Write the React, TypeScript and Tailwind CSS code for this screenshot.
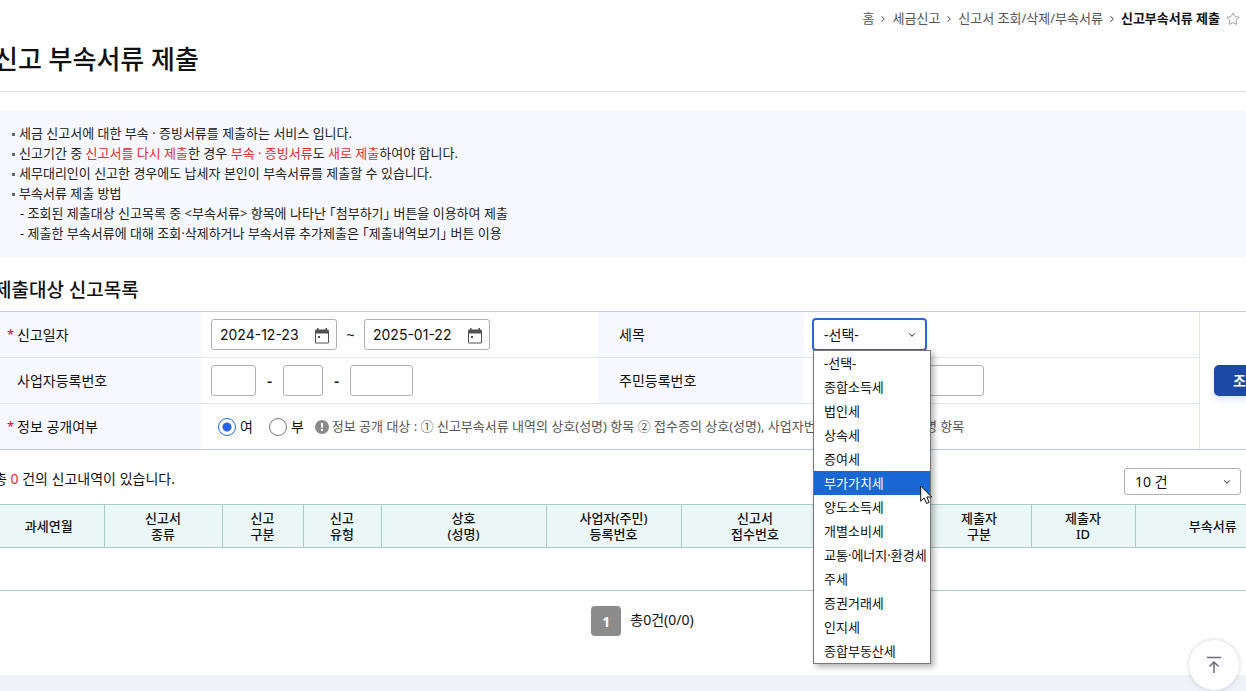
import { useState } from 'react'
import { ChevronDown, ChevronRight, Star } from 'lucide-react'

const TAX_TYPES = [
  '-선택-',
  '종합소득세',
  '법인세',
  '상속세',
  '증여세',
  '부가가치세',
  '양도소득세',
  '개별소비세',
  '교통·에너지·환경세',
  '주세',
  '증권거래세',
  '인지세',
  '종합부동산세',
]

const COLUMNS = [
  { width: 'w-[110px]', lines: ['과세연월'] },
  { width: 'w-[118px]', lines: ['신고서', '종류'] },
  { width: 'w-[81px]', lines: ['신고', '구분'] },
  { width: 'w-[78px]', lines: ['신고', '유형'] },
  { width: 'w-[165px]', lines: ['상호', '(성명)'] },
  { width: 'w-[135px]', lines: ['사업자(주민)', '등록번호'] },
  { width: 'w-[148px]', lines: ['신고서', '접수번호'] },
  { width: 'w-[98px]', lines: [] },
  { width: 'w-[104px]', lines: ['제출자', '구분'] },
  { width: 'w-[104px]', lines: ['제출자', 'ID'] },
  { width: '', lines: ['부속서류'] },
]

const box = 'h-[31px] rounded-[3px] border border-[#b0b0b0] bg-white'

function Breadcrumb() {
  return (
    <nav aria-label="현재 위치" className="flex h-[38px] items-center justify-end gap-1 pr-[6px] text-[13px] text-[#555]">
      <a href="#home">홈</a>
      <ChevronRight size={10} strokeWidth={2.5} />
      <a href="#report">세금신고</a>
      <ChevronRight size={10} strokeWidth={2.5} />
      <a href="#search">신고서 조회/삭제/부속서류</a>
      <ChevronRight size={10} strokeWidth={2.5} />
      <strong className="font-bold text-[#111]">신고부속서류 제출</strong>
      <button aria-label="즐겨찾기" className="pl-0.5">
        <Star size={14} strokeWidth={1.2} className="text-[#777]" />
      </button>
    </nav>
  )
}

function Notice() {
  const bullet = "before:mr-1 before:inline-block before:size-[3px] before:bg-[#666] before:align-middle before:content-['']"
  return (
    <section className="mt-[18px] h-[148px] bg-[#f7f8fd] pt-[13px] pl-[18px] text-[13px] leading-5 text-[#222]">
      <ul>
        <li className={bullet}>세금 신고서에 대한 부속 · 증빙서류를 제출하는 서비스 입니다.</li>
        <li className={bullet}>
          신고기간 중 <span className="text-[#e02b35]">신고서를 다시 제출</span>한 경우{' '}
          <span className="text-[#e02b35]">부속 · 증빙서류</span>도 <span className="text-[#e02b35]">새로 제출</span>하여야 합니다.
        </li>
        <li className={bullet}>세무대리인이 신고한 경우에도 납세자 본인이 부속서류를 제출할 수 있습니다.</li>
        <li className={bullet}>
          부속서류 제출 방법
          <ul className="pl-2">
            <li>- 조회된 제출대상 신고목록 중 &lt;부속서류&gt; 항목에 나타난 ｢첨부하기｣ 버튼을 이용하여 제출</li>
            <li>- 제출한 부속서류에 대해 조회·삭제하거나 부속서류 추가제출은 ｢제출내역보기｣ 버튼 이용</li>
          </ul>
        </li>
      </ul>
    </section>
  )
}

function DateField({ label, value }: { label: string; value: string }) {
  return (
    <div className={`${box} flex w-[126px] items-center justify-between pr-1.5 pl-2`}>
      <input aria-label={label} defaultValue={value} className="w-[90px] font-['Inter',sans-serif] text-[14px] outline-none" />
      <button aria-label={`${label} 달력`} className="pt-0.5">
        <svg width="16" height="16" viewBox="0 0 16 16">
          <path d="M3 0h1.500v1.500h7V0H13v1.500h.5A1.500 1.500 0 0 1 15 3v11a1.500 1.500 0 0 1-1.500 1.500h-11A1.500 1.500 0 0 1 1 14V3a1.500 1.500 0 0 1 1.500-1.500H3z" fill="#505050" />
          <path d="M2 5.500h12v8.500a.5.5 0 0 1-.5.5h-11A.5.5 0 0 1 2 14z" fill="#fff" />
          <path d="M4 8h2v2H4z" fill="#505050" />
        </svg>
      </button>
    </div>
  )
}

function Label({ children, required, className = '' }: { children: string; required?: boolean; className?: string }) {
  return (
    <div className={`flex shrink-0 items-center self-stretch bg-[#f6f8fe] text-[14px] ${className}`}>
      {required && <span className="w-[10px] text-[13px] text-[#d6003a]">*</span>}
      {children}
    </div>
  )
}

function TaxTypeSelect() {
  const [value, setValue] = useState('-선택-')
  return (
    <div className="relative flex items-center">
      <select
        aria-label="세목"
        value={value}
        onChange={(e) => setValue(e.target.value)}
        className="h-[33px] w-[115px] appearance-none rounded-[4px] border-2 border-[#2a66d4] bg-white pl-[10px] text-[14px] outline-none"
      >
        {TAX_TYPES.map((t) => (
          <option key={t}>{t}</option>
        ))}
      </select>
      <ChevronDown size={10} strokeWidth={2.5} className="pointer-events-none absolute right-[10px] text-[#444]" />
      <ul role="listbox" className="absolute top-8 left-px z-10 w-[118px] border border-[#767676] bg-white text-[13px] leading-6 whitespace-nowrap shadow-[3px_3px_6px_rgba(0,0,0,0.3)]">
        {TAX_TYPES.map((t) => (
          <li
            key={t}
            role="option"
            aria-selected={t === '부가가치세'}
            onClick={() => setValue(t)}
            className={`pl-[10px] ${t === '부가가치세' ? 'bg-[#1967d2] text-white' : 'text-[#111]'}`}
          >
            {t}
          </li>
        ))}
      </ul>
      <svg className="absolute top-[167px] left-[108px] z-20" width="13" height="20" viewBox="0 0 13 20">
        <path d="M.7 1v15.200l3.500-3.300 2.400 5.600 2.600-1.100-2.400-5.400h4.900z" fill="#fff" stroke="#111" strokeWidth="1" />
      </svg>
    </div>
  )
}

function SearchForm() {
  const radio =
    'size-[18px] appearance-none rounded-full border border-[#777] bg-white checked:border-[#2563eb] checked:bg-[radial-gradient(circle,#2563eb_4px,#fff_5px)]'
  return (
    <form className="flex border-y border-[#bccbdc] text-[13px]">
      <div className="flex-1 divide-y divide-[#e0e4ec] border-r border-[#e0e4ec]">
        <div className="flex h-[46px] items-center">
          <Label required className="w-[207px] pl-[13px]">신고일자</Label>
          <div className="flex w-[397px] shrink-0 items-center pl-[10px]">
            <DateField label="신고일자 시작" value="2024-12-23" />
            <span className="w-[27px] text-center text-[14px]">~</span>
            <DateField label="신고일자 종료" value="2025-01-22" />
          </div>
          <Label className="w-[206px] pl-[21px]">세목</Label>
          <div className="pl-2">
            <TaxTypeSelect />
          </div>
        </div>
        <div className="flex h-[46px] items-center">
          <Label className="w-[207px] pl-[23px]">사업자등록번호</Label>
          <div className="flex w-[397px] shrink-0 items-center pl-[10px]">
            <input aria-label="사업자등록번호 첫째 자리" className={`${box} w-[45px]`} />
            <span className="w-[27px] text-center text-[16px] font-medium">-</span>
            <input aria-label="사업자등록번호 둘째 자리" className={`${box} w-10`} />
            <span className="w-[27px] text-center text-[16px] font-medium">-</span>
            <input aria-label="사업자등록번호 셋째 자리" className={`${box} w-[63px]`} />
          </div>
          <Label className="w-[206px] pl-[21px]">주민등록번호</Label>
          <div className="flex items-center gap-[27px] pl-[9px]">
            <input aria-label="주민등록번호 앞자리" className={`${box} w-[72px]`} />
            <input aria-label="주민등록번호 뒷자리" className={`${box} w-[72px]`} />
          </div>
        </div>
        <div className="flex h-[45px] items-center">
          <Label required className="w-[207px] pl-[13px]">정보 공개여부</Label>
          <div className="flex items-center pl-[17px] whitespace-nowrap">
            <label className="flex items-center gap-1 text-[14px]">
              <input type="radio" name="open" defaultChecked className={radio} />여
            </label>
            <label className="ml-4 flex items-center gap-1 text-[14px]">
              <input type="radio" name="open" className={radio} />부
            </label>
            <span className="mr-[3px] ml-[11px] flex size-[14px] items-center justify-center rounded-full bg-[#8a8a8a]">
              <svg width="4" height="8" viewBox="0 0 4 8" fill="#fff">
                <path d="M1 0h2v4.800H1zM1 6h2v2H1z" />
              </svg>
            </span>
            <p className="text-[#555]">
              정보 공개 대상 : ① 신고부속서류 내역의 상호(성명) 항목 ② 접수증의 상호(성명), 사업자번호, 제출자, 제출파일명 항목
            </p>
          </div>
        </div>
      </div>
      <div className="flex w-[91px] items-center pl-[14px]">
        <button type="button" className="h-[31px] w-16 rounded-[5px] bg-[#1b49a5] text-[14px] font-bold text-white shadow-[0_3px_6px_rgba(60,100,220,0.2)]">
          조회
        </button>
      </div>
    </form>
  )
}

function ResultTable() {
  return (
    <table className="w-full table-fixed border-collapse text-[13px] leading-4">
      <thead>
        <tr className="h-[43px] border-y border-[#a9cbc5] bg-[#ebf7f6]">
          {COLUMNS.map((c, i) => (
            <th key={i} className={`${c.width} border-r border-[#a9cbc5] p-0 font-medium`}>
              {c.lines.map((l) => (
                <div key={l}>{l}</div>
              ))}
            </th>
          ))}
        </tr>
      </thead>
      <tbody>
        <tr className="h-[43px] border-b border-[#a9cbc5]">
          <td colSpan={COLUMNS.length} />
        </tr>
      </tbody>
    </table>
  )
}

export default function App() {
  return (
    <div className="min-h-screen overflow-hidden bg-white font-['Noto_Sans','Noto_Sans_CJK_KR',sans-serif] text-[#111]">
      <Breadcrumb />
      {/* the content column is wider than the window on both sides */}
      <main className="-mr-[45px] -ml-[6px]">
        <h1 className="h-[54px] border-b border-[#dfe1e3] text-[26px] leading-[42px] font-medium">신고 부속서류 제출</h1>
        <Notice />
        <h2 className="pt-[18px] pb-[7px] text-[19px] leading-7 font-medium">제출대상 신고목록</h2>
        <SearchForm />
        <div className="flex h-[54px] items-start justify-between pt-[18px] pr-[50px]">
          <p className="text-[14px] leading-[22px]">
            총 <span className="text-[#e02b35]">0</span> 건의 신고내역이 있습니다.
          </p>
          <div className="relative flex items-center">
            <select aria-label="목록 건수" className="h-[27px] w-[117px] appearance-none rounded-[3px] border border-[#b0b0b0] bg-white pl-[10px] text-[14px]">
              <option>10 건</option>
            </select>
            <ChevronDown size={10} strokeWidth={2.5} className="pointer-events-none absolute right-[9px] text-[#444]" />
          </div>
        </div>
        <ResultTable />
        <div className="flex h-[84px] items-start justify-center gap-[9px] pt-[15px] text-[14px]">
          <button className="size-[30px] rounded-[4px] bg-[#8c8c8c] font-bold text-white">1</button>
          <span className="pt-[3px]">총0건(0/0)</span>
        </div>
      </main>
      <footer className="h-4 bg-[#f0f2f8]" />
      <button
        aria-label="맨 위로"
        className="fixed right-[7px] bottom-px flex size-[50px] items-center justify-center rounded-full bg-white shadow-[0_0_5px_rgba(0,0,0,0.18)]"
      >
        <svg width="16" height="18" viewBox="0 0 16 18" fill="none" stroke="#6d6a7c" strokeWidth="1.5">
          <path d="M1 1.500h14M8 17V6M3.500 10.500 8 6l4.500 4.500" />
        </svg>
      </button>
    </div>
  )
}
